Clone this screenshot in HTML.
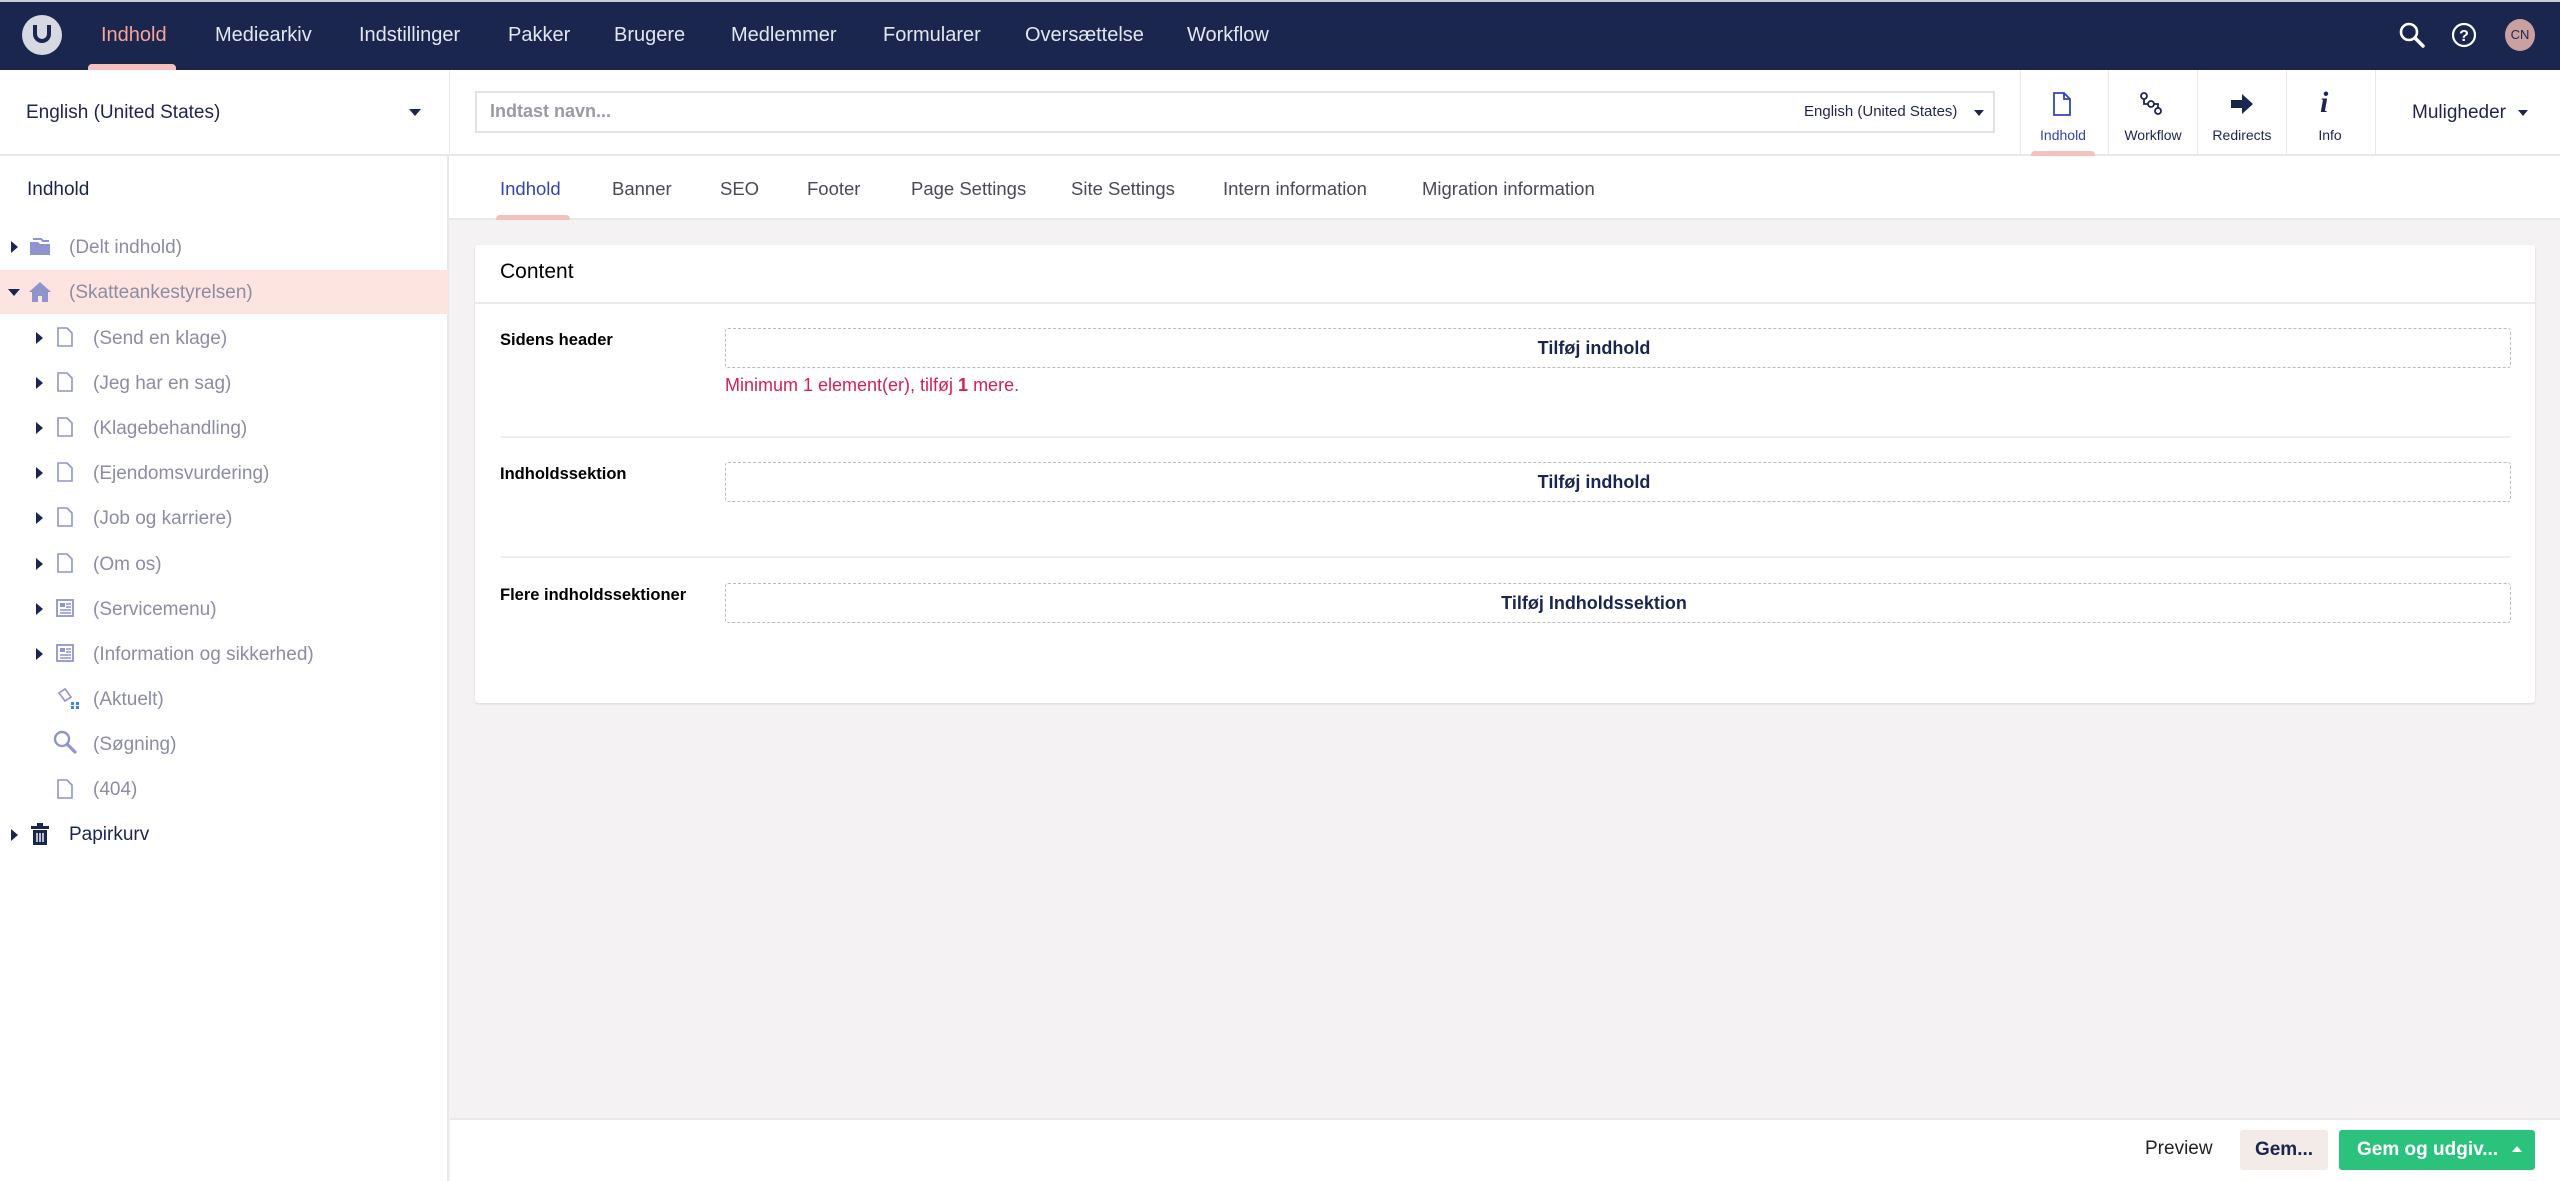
<!DOCTYPE html>
<html><head><meta charset="utf-8"><style>
*{box-sizing:border-box;margin:0;padding:0}
body{width:2560px;height:1181px;overflow:hidden;background:#f4f2f2;font-family:"Liberation Sans",sans-serif;color:#1b264f;position:relative}
.a{position:absolute;white-space:nowrap}
.top{left:0;top:0;width:2560px;height:70px;background:#1b264f;border-top:2px solid #c9ccd6}
.nav{top:24px;font-size:20px;color:#e4e6ee}
.row2{left:0;top:70px;width:2560px;height:86px;background:#fff;border-bottom:2px solid #e9e9eb}
.side{left:0;top:156px;width:449px;height:1025px;background:#fff;border-right:2px solid #e9e9eb}
.tabs{left:449px;top:156px;width:2111px;height:64px;background:#fff;border-bottom:2px solid #e9e9eb}
.tab{top:178px;font-size:18.5px;color:#4a4a55}
.tree{font-size:19px;color:#8c8ca3}
.arr{width:0;height:0;border-top:6px solid transparent;border-bottom:6px solid transparent;border-left:7px solid #1b264f}
.dbox{border:1px dashed #bbb;border-radius:3px;background:#fff;text-align:center;font-size:18px;font-weight:bold;color:#1b264f;line-height:38px;padding-right:48px}
.lbl{font-size:16.5px;font-weight:bold;color:#000}
.sep{height:2px;background:#f0eeee}
.app{top:127px;font-size:14px;color:#1b264f;text-align:center;width:86px}
.vs{top:70px;width:1px;height:86px;background:#e9e9eb}
</style></head><body>
<div class="a top"></div>
<div class="a" style="left:22px;top:15px;width:40px;height:40px;border-radius:50%;background:#d6d8e2"></div>
<div class="a" style="left:33px;top:25px;width:18px;height:18px;border:4px solid #1b264f;border-top:none;border-radius:0 0 9px 9px"></div>
<div class="a nav" style="left:101px;color:#f5a59a">Indhold</div>
<div class="a" style="left:88px;top:64px;width:88px;height:6px;background:#f5c1bc;border-radius:4px 4px 0 0"></div>
<div class="a nav" style="left:215px">Mediearkiv</div>
<div class="a nav" style="left:359px">Indstillinger</div>
<div class="a nav" style="left:508px">Pakker</div>
<div class="a nav" style="left:614px">Brugere</div>
<div class="a nav" style="left:731px">Medlemmer</div>
<div class="a nav" style="left:883px">Formularer</div>
<div class="a nav" style="left:1025px">Oversættelse</div>
<div class="a nav" style="left:1187px">Workflow</div>
<svg class="a" style="left:2398px;top:21px" width="28" height="28" viewBox="0 0 28 28"><circle cx="11" cy="11" r="8" fill="none" stroke="#fff" stroke-width="2.6"/><path d="M17 17l8 8" stroke="#fff" stroke-width="3.5" stroke-linecap="round"/></svg>
<svg class="a" style="left:2451px;top:22px" width="26" height="26" viewBox="0 0 26 26"><circle cx="13" cy="13" r="11" fill="none" stroke="#fff" stroke-width="2.2"/><text x="13" y="19" font-size="16" font-weight="bold" text-anchor="middle" fill="#fff" font-family="Liberation Sans">?</text></svg>
<div class="a" style="left:2505px;top:19px;width:30px;height:32px;border-radius:50%;background:#caa0a0;color:#1b264f;font-size:13px;text-align:center;line-height:32px">CN</div>

<div class="a row2"></div>
<div class="a" style="left:26px;top:102px;font-size:19px">English (United States)</div>
<div class="a" style="left:409px;top:109px;border-left:6px solid transparent;border-right:6px solid transparent;border-top:7px solid #1b264f"></div>
<div class="a" style="left:449px;top:70px;width:1px;height:86px;background:#e9e9eb"></div>
<div class="a" style="left:475px;top:91px;width:1520px;height:42px;border:2px solid #e3e3e6;background:#fff"></div>
<div class="a" style="left:490px;top:101px;font-size:18px;font-weight:bold;color:#9a9aa6">Indtast navn...</div>
<div class="a" style="left:1804px;top:103px;font-size:15px;color:#1b264f">English (United States)</div>
<div class="a" style="left:1974px;top:110px;border-left:5px solid transparent;border-right:5px solid transparent;border-top:6px solid #1b264f"></div>
<div class="a vs" style="left:2020px"></div><div class="a vs" style="left:2108px"></div><div class="a vs" style="left:2197px"></div><div class="a vs" style="left:2286px"></div><div class="a vs" style="left:2375px"></div>
<svg class="a" style="left:2053px;top:92px" width="18" height="24" viewBox="0 0 18 24"><path d="M1 1h10l6 6v16H1z M11 1v6h6" fill="none" stroke="#3544b1" stroke-width="1.8"/></svg>
<div class="a app" style="left:2020px;color:#3544b1">Indhold</div>
<div class="a" style="left:2031px;top:151px;width:64px;height:5px;background:#f5c1bc;border-radius:4px 4px 0 0"></div>
<svg class="a" style="left:2140px;top:92px" width="22" height="24" viewBox="0 0 22 24"><circle cx="4" cy="4" r="3" fill="none" stroke="#1b264f" stroke-width="1.8"/><circle cx="11" cy="12" r="3" fill="none" stroke="#1b264f" stroke-width="1.8"/><circle cx="18" cy="19" r="3" fill="none" stroke="#1b264f" stroke-width="1.8"/><path d="M4 7v5h4M14 12h4v4" fill="none" stroke="#1b264f" stroke-width="1.8"/></svg>
<div class="a app" style="left:2110px">Workflow</div>
<svg class="a" style="left:2230px;top:93px" width="24" height="22" viewBox="0 0 24 22"><path d="M1 7h11V1l11 10-11 10v-6H1z" fill="#1b264f"/></svg>
<div class="a app" style="left:2199px">Redirects</div>
<div class="a" style="left:2320px;top:86px;font-family:'Liberation Serif',serif;font-style:italic;font-weight:bold;font-size:30px;color:#1b264f">i</div>
<div class="a app" style="left:2287px">Info</div>
<div class="a" style="left:2412px;top:102px;font-size:19px">Muligheder</div>
<div class="a" style="left:2518px;top:110px;border-left:5px solid transparent;border-right:5px solid transparent;border-top:6px solid #1b264f"></div>

<div class="a side"></div>
<div class="a" style="left:27px;top:179px;font-size:19px;color:#1b264f">Indhold</div>
<div class="a" style="left:0;top:270px;width:448px;height:44px;background:#fde4e1"></div>
<div class="a arr" style="left:11px;top:241px"></div>
<svg class="a" style="left:29px;top:236px" width="22" height="20" viewBox="0 0 22 20"><path d="M1 6h8l2 2h10v11H1z" fill="#8f94cc"/><path d="M4 3h8l2 2h6" fill="none" stroke="#8f94cc" stroke-width="2"/></svg>
<div class="a tree" style="left:69px;top:237px">(Delt indhold)</div>
<div class="a" style="left:8px;top:289px;border-left:6px solid transparent;border-right:6px solid transparent;border-top:7px solid #1b264f"></div>
<svg class="a" style="left:28px;top:281px" width="24" height="22" viewBox="0 0 24 22"><path d="M12 1L1 11h3v10h6v-6h4v6h6V11h3z" fill="#8f94cc"/></svg>
<div class="a tree" style="left:69px;top:282px">(Skatteankestyrelsen)</div>

<div class="a arr" style="left:36px;top:332px"></div><svg class="a" style="left:57px;top:327px" width="16" height="20" viewBox="0 0 16 20"><path d="M1 1h9l5 5v13H1z" fill="none" stroke="#8f94cc" stroke-width="1.6"/></svg><div class="a tree" style="left:93px;top:328px">(Send en klage)</div>
<div class="a arr" style="left:36px;top:377px"></div><svg class="a" style="left:57px;top:372px" width="16" height="20" viewBox="0 0 16 20"><path d="M1 1h9l5 5v13H1z" fill="none" stroke="#8f94cc" stroke-width="1.6"/></svg><div class="a tree" style="left:93px;top:373px">(Jeg har en sag)</div>
<div class="a arr" style="left:36px;top:422px"></div><svg class="a" style="left:57px;top:417px" width="16" height="20" viewBox="0 0 16 20"><path d="M1 1h9l5 5v13H1z" fill="none" stroke="#8f94cc" stroke-width="1.6"/></svg><div class="a tree" style="left:93px;top:418px">(Klagebehandling)</div>
<div class="a arr" style="left:36px;top:467px"></div><svg class="a" style="left:57px;top:462px" width="16" height="20" viewBox="0 0 16 20"><path d="M1 1h9l5 5v13H1z" fill="none" stroke="#8f94cc" stroke-width="1.6"/></svg><div class="a tree" style="left:93px;top:463px">(Ejendomsvurdering)</div>
<div class="a arr" style="left:36px;top:512px"></div><svg class="a" style="left:57px;top:507px" width="16" height="20" viewBox="0 0 16 20"><path d="M1 1h9l5 5v13H1z" fill="none" stroke="#8f94cc" stroke-width="1.6"/></svg><div class="a tree" style="left:93px;top:508px">(Job og karriere)</div>
<div class="a arr" style="left:36px;top:558px"></div><svg class="a" style="left:57px;top:553px" width="16" height="20" viewBox="0 0 16 20"><path d="M1 1h9l5 5v13H1z" fill="none" stroke="#8f94cc" stroke-width="1.6"/></svg><div class="a tree" style="left:93px;top:554px">(Om os)</div>
<div class="a arr" style="left:36px;top:603px"></div><svg class="a" style="left:56px;top:599px" width="18" height="18" viewBox="0 0 18 18"><rect x="1" y="1" width="16" height="16" fill="none" stroke="#8f94cc" stroke-width="1.8"/><rect x="4" y="4" width="5" height="4" fill="#8f94cc"/><path d="M10 5h5M10 8h5M4 11h11M4 14h11" stroke="#8f94cc" stroke-width="1.4"/></svg><div class="a tree" style="left:93px;top:599px">(Servicemenu)</div>
<div class="a arr" style="left:36px;top:648px"></div><svg class="a" style="left:56px;top:644px" width="18" height="18" viewBox="0 0 18 18"><rect x="1" y="1" width="16" height="16" fill="none" stroke="#8f94cc" stroke-width="1.8"/><rect x="4" y="4" width="5" height="4" fill="#8f94cc"/><path d="M10 5h5M10 8h5M4 11h11M4 14h11" stroke="#8f94cc" stroke-width="1.4"/></svg><div class="a tree" style="left:93px;top:644px">(Information og sikkerhed)</div>
<svg class="a" style="left:56px;top:687px" width="24" height="22" viewBox="0 0 24 22"><path d="M3 6l6-4 6 8-6 4z" fill="none" stroke="#8f94cc" stroke-width="1.6"/><rect x="15" y="15" width="3" height="3" fill="#3b82f6"/><rect x="20" y="15" width="3" height="3" fill="#3b82f6"/><rect x="15" y="19" width="3" height="3" fill="#3b82f6"/><rect x="20" y="19" width="3" height="3" fill="#3b82f6"/></svg><div class="a tree" style="left:93px;top:689px">(Aktuelt)</div>
<svg class="a" style="left:53px;top:730px" width="24" height="24" viewBox="0 0 24 24"><circle cx="9" cy="9" r="7" fill="none" stroke="#8f94cc" stroke-width="2.4"/><path d="M14 14l8 8" stroke="#8f94cc" stroke-width="3.2" stroke-linecap="round"/></svg><div class="a tree" style="left:93px;top:734px">(Søgning)</div>
<svg class="a" style="left:57px;top:779px" width="16" height="20" viewBox="0 0 16 20"><path d="M1 1h9l5 5v13H1z" fill="none" stroke="#8f94cc" stroke-width="1.6"/></svg><div class="a tree" style="left:93px;top:779px">(404)</div>
<div class="a arr" style="left:11px;top:829px"></div>
<svg class="a" style="left:31px;top:823px" width="18" height="22" viewBox="0 0 18 22"><rect x="0" y="3" width="18" height="3" fill="#1b264f"/><rect x="6" y="0" width="6" height="3" fill="#1b264f"/><path d="M2 7h14v15H2z" fill="#1b264f"/><path d="M6 10v9M9 10v9M12 10v9" stroke="#fff" stroke-width="1.4"/></svg>
<div class="a tree" style="left:69px;top:824px;color:#1b264f">Papirkurv</div>

<div class="a tabs"></div>
<div class="a tab" style="left:500px;color:#3544b1">Indhold</div>
<div class="a" style="left:496px;top:215px;width:74px;height:5px;background:#f5c1bc;border-radius:4px 4px 0 0"></div>
<div class="a tab" style="left:612px">Banner</div>
<div class="a tab" style="left:720px">SEO</div>
<div class="a tab" style="left:807px">Footer</div>
<div class="a tab" style="left:911px">Page Settings</div>
<div class="a tab" style="left:1071px">Site Settings</div>
<div class="a tab" style="left:1223px">Intern information</div>
<div class="a tab" style="left:1422px">Migration information</div>

<div class="a" style="left:475px;top:245px;width:2060px;height:458px;background:#fff;border-radius:3px;box-shadow:0 1px 2px rgba(0,0,0,.12)"></div>
<div class="a" style="left:500px;top:260px;font-size:21px;color:#000">Content</div>
<div class="a" style="left:475px;top:302px;width:2060px;height:2px;background:#eceaea"></div>
<div class="a lbl" style="left:500px;top:331px">Sidens header</div>
<div class="a dbox" style="left:725px;top:328px;width:1786px;height:40px">Tilføj indhold</div>
<div class="a" style="left:725px;top:375px;font-size:18px;color:#d42054">Minimum 1 element(er), tilføj <b>1</b> mere.</div>
<div class="a sep" style="left:500px;top:436px;width:2011px"></div>
<div class="a lbl" style="left:500px;top:465px">Indholdssektion</div>
<div class="a dbox" style="left:725px;top:462px;width:1786px;height:40px">Tilføj indhold</div>
<div class="a sep" style="left:500px;top:556px;width:2011px"></div>
<div class="a lbl" style="left:500px;top:586px">Flere indholdssektioner</div>
<div class="a dbox" style="left:725px;top:583px;width:1786px;height:40px">Tilføj Indholdssektion</div>

<div class="a" style="left:450px;top:1118px;width:2110px;height:63px;background:#fff;border-top:2px solid #e9e9eb"></div>
<div class="a" style="left:2145px;top:1138px;font-size:19px;color:#222">Preview</div>
<div class="a" style="left:2240px;top:1130px;width:88px;height:40px;background:#f3ebe8;border-radius:3px;font-size:19px;font-weight:bold;text-align:center;line-height:40px">Gem...</div>
<div class="a" style="left:2339px;top:1130px;width:196px;height:40px;background:#2bc37c;border-radius:3px;color:#fff;font-size:19px;font-weight:bold;line-height:40px;padding-left:18px">Gem og udgiv...</div>
<div class="a" style="left:2512px;top:1146px;border-left:5px solid transparent;border-right:5px solid transparent;border-bottom:6px solid #fff"></div>
</body></html>
